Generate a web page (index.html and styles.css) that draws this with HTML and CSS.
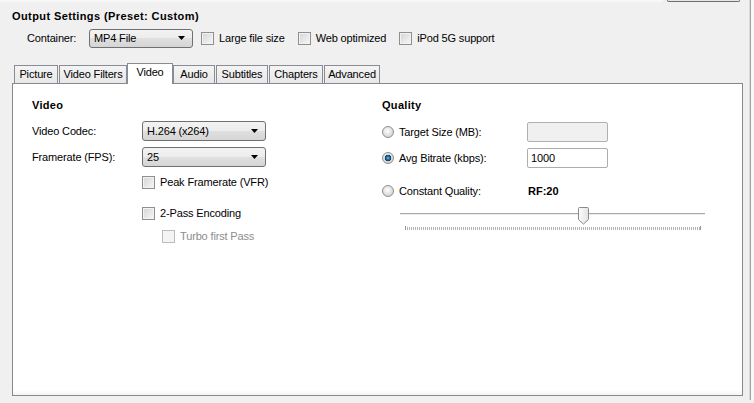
FILE: index.html
```html
<!DOCTYPE html>
<html>
<head>
<meta charset="utf-8">
<title>Output Settings</title>
<link rel="stylesheet" href="styles.css">
</head>
<body>
<div class="window">
  <div class="main">
    <div class="topbar"><div class="topstrip"></div><div class="btnbottom"></div></div>
    <div class="title">Output Settings (Preset: Custom)</div>
    <div class="container-row">
      <span class="clbl">Container:</span>
      <div class="combo combo-container"><span>MP4 File</span><svg class="arrow" width="7" height="4" viewBox="0 0 7 4"><polygon points="0,0 7,0 3.5,4" fill="#000"/></svg></div>
      <label class="check first"><span class="box"></span>Large file size</label>
      <label class="check"><span class="box"></span>Web optimized</label>
      <label class="check"><span class="box"></span>iPod 5G support</label>
    </div>
    <div class="tabs">
      <div class="tab t-picture">Picture</div>
      <div class="tab t-filters">Video Filters</div>
      <div class="tab active t-video">Video</div>
      <div class="tab t-audio">Audio</div>
      <div class="tab t-subs">Subtitles</div>
      <div class="tab t-chap">Chapters</div>
      <div class="tab t-adv">Advanced</div>
    </div>
    <div class="panel">
      <div class="col">
        <div class="heading">Video</div>
        <div class="field f1">
          <span class="lbl">Video Codec:</span>
          <div class="combo combo-wide"><span>H.264 (x264)</span><svg class="arrow" width="7" height="4" viewBox="0 0 7 4"><polygon points="0,0 7,0 3.5,4" fill="#000"/></svg></div>
        </div>
        <div class="field f2">
          <span class="lbl">Framerate (FPS):</span>
          <div class="combo combo-wide"><span>25</span><svg class="arrow" width="7" height="4" viewBox="0 0 7 4"><polygon points="0,0 7,0 3.5,4" fill="#000"/></svg></div>
        </div>
        <label class="check opt o-peak"><span class="box"></span>Peak Framerate (VFR)</label>
        <label class="check opt o-pass"><span class="box"></span>2-Pass Encoding</label>
        <label class="check opt o-turbo disabled"><span class="box"></span>Turbo first Pass</label>
      </div>
      <div class="col">
        <div class="heading">Quality</div>
        <div class="rrow r1">
          <span class="radio"></span><span class="rlbl">Target Size (MB):</span>
          <div class="tb tb-disabled"></div>
        </div>
        <div class="rrow r2">
          <span class="radio on"></span><span class="rlbl">Avg Bitrate (kbps):</span>
          <div class="tb">1000</div>
        </div>
        <div class="rrow r3">
          <span class="radio"></span><span class="rlbl">Constant Quality:</span>
          <span class="rf">RF:20</span>
        </div>
        <svg class="slider" width="310" height="26" viewBox="0 0 310 26">
          <defs>
            <linearGradient id="thumb" x1="0" y1="0" x2="1" y2="0">
              <stop offset="0" stop-color="#fdfdfd"/>
              <stop offset="1" stop-color="#e2e2e2"/>
            </linearGradient>
          </defs>
          <rect x="2" y="8" width="305" height="1" fill="#a8a8a8"/>
          <rect x="2" y="9" width="305" height="1" fill="#ececec"/>
          <line x1="7" y1="23.5" x2="303" y2="23.5" stroke="#b4b4b4" stroke-width="3" stroke-dasharray="1 1"/>
          <rect x="7" y="21" width="1" height="4" fill="#999"/>
          <rect x="302" y="21" width="1" height="4" fill="#999"/>
          <path d="M180.5 3.5 q0 -1 1 -1 h8 q1 0 1 1 v11 l-5 4.5 l-5 -4.5 z" fill="url(#thumb)" stroke="#8a8a8a" stroke-width="1"/>
        </svg>
      </div>
    </div>
  </div>
  <div class="edge"></div>
</div>
</body>
</html>
```
FILE: styles.css
```css
* { box-sizing: border-box; }
html, body { margin: 0; padding: 0; }
body {
  background: #f0f0f0;
  font-family: "Liberation Sans", Arial, sans-serif;
  font-size: 11px;
  letter-spacing: -0.15px;
  color: #000;
  overflow: hidden;
}
.window { display: flex; height: 403px; }
.main { width: 749px; flex: none; }
.edge {
  flex: 1;
  border-left: 1px solid #dadada;
  box-shadow: inset 1px 0 0 #a4a4a4;
  background: #f8f8f8;
  margin-bottom: 3px;
}
.topbar { height: 2px; display: flex; }
.topstrip { width: 663px; background: #f7f7f7; }
.btnbottom {
  width: 73px; margin-left: 4px; height: 2px;
  border: 1px solid #707070; border-top: none;
  border-radius: 0 0 3px 3px; background: #e6e6e6;
}
.title {
  margin: 7px 0 0 12px;
  font-weight: bold;
  letter-spacing: 0.4px;
  line-height: 14px;
  height: 14px;
}
.container-row {
  display: flex; align-items: center;
  height: 20px; margin-top: 5px; padding-left: 27px;
}
.clbl { width: 62px; }
.combo {
  height: 20px;
  border: 1px solid #707070;
  border-radius: 3px;
  background: linear-gradient(#f3f3f3, #ececec 50%, #e0e0e0 50%, #d5d5d5);
  display: flex; align-items: center;
  padding-left: 4px;
}
.arrow { margin-left: auto; margin-right: 7px; }
.combo-container { width: 104px; height: 19px; }
.combo-wide { width: 124px; }
.check { display: flex; align-items: center; white-space: nowrap; }
.container-row .check { margin-left: 13px; }
.container-row .check.first { margin-left: 8px; }
.box {
  width: 13px; height: 13px; flex: none;
  border: 1px solid #8e8f8f;
  background: linear-gradient(135deg, #d4d4d4, #f8f8f8);
  box-shadow: inset 0 0 0 1px #f2f2f2;
  margin-right: 5px;
}
.tabs {
  display: flex; align-items: flex-end;
  margin: 15px 0 0 14px; height: 20px;
}
.tab {
  height: 18px; line-height: 16px;
  padding: 0;
  text-align: center;
  border: 1px solid #898c95; border-bottom: none;
  background: linear-gradient(#f4f4f4, #e8e8e8);
  margin-right: 1px;
  white-space: nowrap;
  flex: none;
}
.t-picture { width: 44px; }
.t-filters { width: 68px; }
.t-video { width: 46px; }
.t-audio { width: 42px; }
.t-subs { width: 52px; }
.t-chap { width: 54px; }
.t-adv { width: 56px; }
.tab.active {
  height: 21px; line-height: 17px;
  margin: 0 0 -1px -1px;
  background: #fff;
  position: relative; z-index: 1;
}
.panel {
  margin: 0 6px 0 12px;
  height: 313px;
  border: 1px solid #858890;
  background: linear-gradient(#fff calc(100% - 5px), #f3f3f3);
  display: grid;
  grid-template-columns: 350px 1fr;
  align-content: start;
  padding: 14px 0 0 19px;
}
.heading { font-weight: bold; letter-spacing: 0.3px; line-height: 14px; height: 14px; }
.field { display: flex; align-items: center; height: 20px; }
.f1 { margin-top: 9px; }
.f2 { margin-top: 6px; }
.lbl { width: 110px; }
.opt { height: 14px; padding-left: 110px; }
.o-peak { margin-top: 8px; }
.o-pass { margin-top: 17px; }
.o-turbo { margin-top: 9px; padding-left: 130px; }
.disabled { color: #8d8d8d; }
.disabled .box { border-color: #bcbcbc; background: #f4f4f4; box-shadow: none; }
.rrow { display: flex; align-items: center; height: 20px; }
.r1 { margin-top: 10px; }
.r2 { margin-top: 6px; }
.r3 { margin-top: 16px; height: 14px; }
.radio {
  width: 12px; height: 12px; flex: none;
  border-radius: 50%;
  border: 1px solid #8e8f8f;
  background: radial-gradient(circle at 45% 40%, #ffffff, #d0d0d0 80%);
  margin-right: 5px;
}
.radio.on {
  background:
    radial-gradient(circle at 50% 50%, #7cc6e6 0, #2a79a6 1.5px, #0e3a5a 3px, rgba(14,58,90,0) 3.6px),
    radial-gradient(circle at 45% 40%, #ffffff, #d0d0d0 80%);
}
.rlbl { width: 128px; }
.tb {
  width: 81px; height: 20px;
  border: 1px solid #abadb3;
  border-radius: 2px;
  background: #fff;
  padding-left: 3px;
  line-height: 18px;
}
.tb-disabled { background: #f0f0f0; border-color: #adb2b5; }
.rf { font-weight: bold; margin-left: 1px; letter-spacing: 0; }
.slider { display: block; margin: 7px 0 0 16px; }
```
